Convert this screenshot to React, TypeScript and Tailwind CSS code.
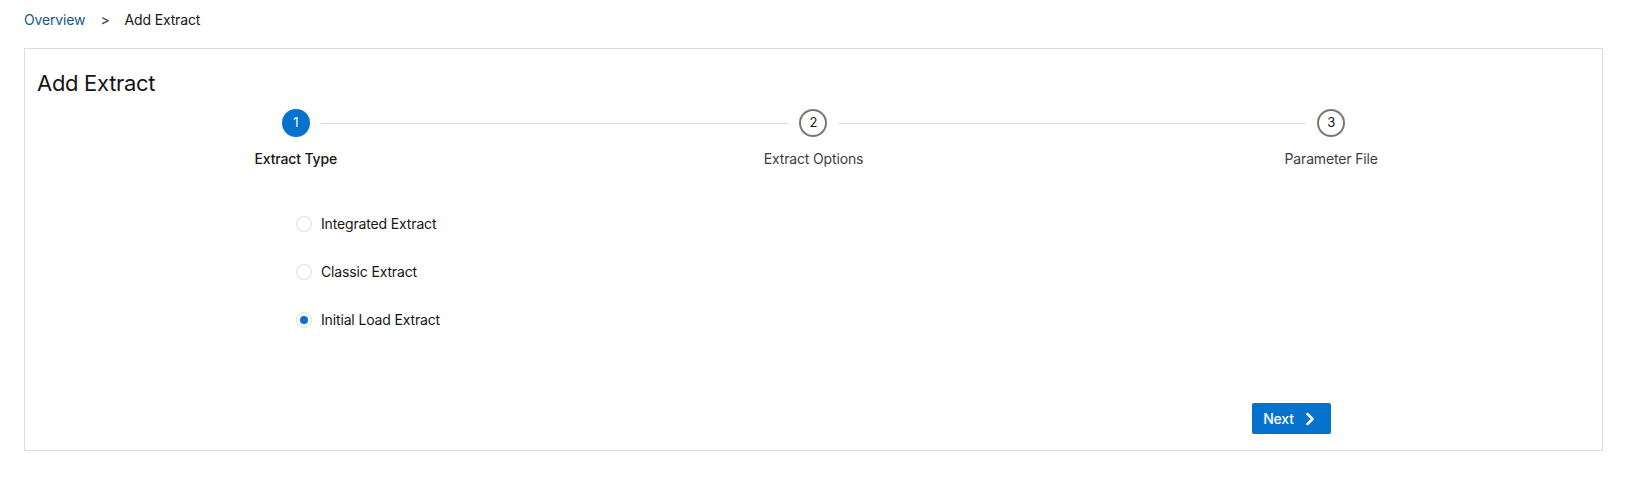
import { ChevronRight } from "lucide-react";

const steps = [
  { n: 1, label: "Extract Type", active: true },
  { n: 2, label: "Extract Options", active: false },
  { n: 3, label: "Parameter File", active: false },
];

const options = [
  { label: "Integrated Extract", checked: false },
  { label: "Classic Extract", checked: false },
  { label: "Initial Load Extract", checked: true },
];

function Radio({ checked }: { checked: boolean }) {
  return (
    <span className="flex h-4 w-4 items-center justify-center rounded-full border border-[#dedede] bg-white">
      {checked && <span className="h-[8px] w-[8px] rounded-full bg-[#0572ce]" />}
    </span>
  );
}

export default function App() {
  return (
    <div className="min-h-screen bg-white pl-6 pr-7 pt-[10px] font-['Inter','Liberation_Sans',sans-serif] tracking-[-0.15px] text-[#161513]">
      <nav className="flex h-5 items-center text-sm leading-5">
        <a href="#" className="text-[#0f5a8c]">Overview</a>
        <span className="mx-[15px] text-[#3f3d3a]">&gt;</span>
        <span>Add Extract</span>
      </nav>

      <div className="mt-[18px] border border-[#dcdcdc] px-3 pb-4 pt-5">
        <h1 className="text-[22px] leading-7 font-normal tracking-[-0.3px]">Add Extract</h1>

        <div className="mt-3 grid grid-cols-3">
          {steps.map((s, i) => (
            <div key={s.n} className="flex flex-col items-center">
              <div className="relative flex w-full items-center justify-center">
                {i > 0 && <span className="absolute left-0 right-1/2 mr-[25px] h-px bg-[#dcdcdc]" />}
                {i < steps.length - 1 && (
                  <span className="absolute left-1/2 right-0 ml-[25px] h-px bg-[#dcdcdc]" />
                )}
                {s.active ? (
                  <span className="flex h-7 w-7 items-center justify-center rounded-full bg-[#0572ce] text-[13px] text-white">
                    {s.n}
                  </span>
                ) : (
                  <span className="flex h-7 w-7 items-center justify-center rounded-full border-2 border-[#7b7976] bg-white text-[13px] text-[#161513]">
                    {s.n}
                  </span>
                )}
              </div>
              <span
                className={
                  "mt-3 text-sm leading-5 " + (s.active ? "font-medium text-[#161513]" : "text-[#3f3d3a]")
                }
              >
                {s.label}
              </span>
            </div>
          ))}
        </div>

        <div className="mx-[259px] mt-[31px]">
          {options.map((o) => (
            <label key={o.label} className="flex h-12 items-center gap-[9px] text-sm">
              <Radio checked={o.checked} />
              <span>{o.label}</span>
            </label>
          ))}

          <div className="mt-[59px] flex justify-end">
            <button className="flex h-[31px] w-[79px] items-center justify-center gap-[6px] rounded-[2px] bg-[#0572ce] text-sm font-medium text-white">
              Next
              <ChevronRight className="h-5 w-5" strokeWidth={3} />
            </button>
          </div>
        </div>
      </div>
    </div>
  );
}
